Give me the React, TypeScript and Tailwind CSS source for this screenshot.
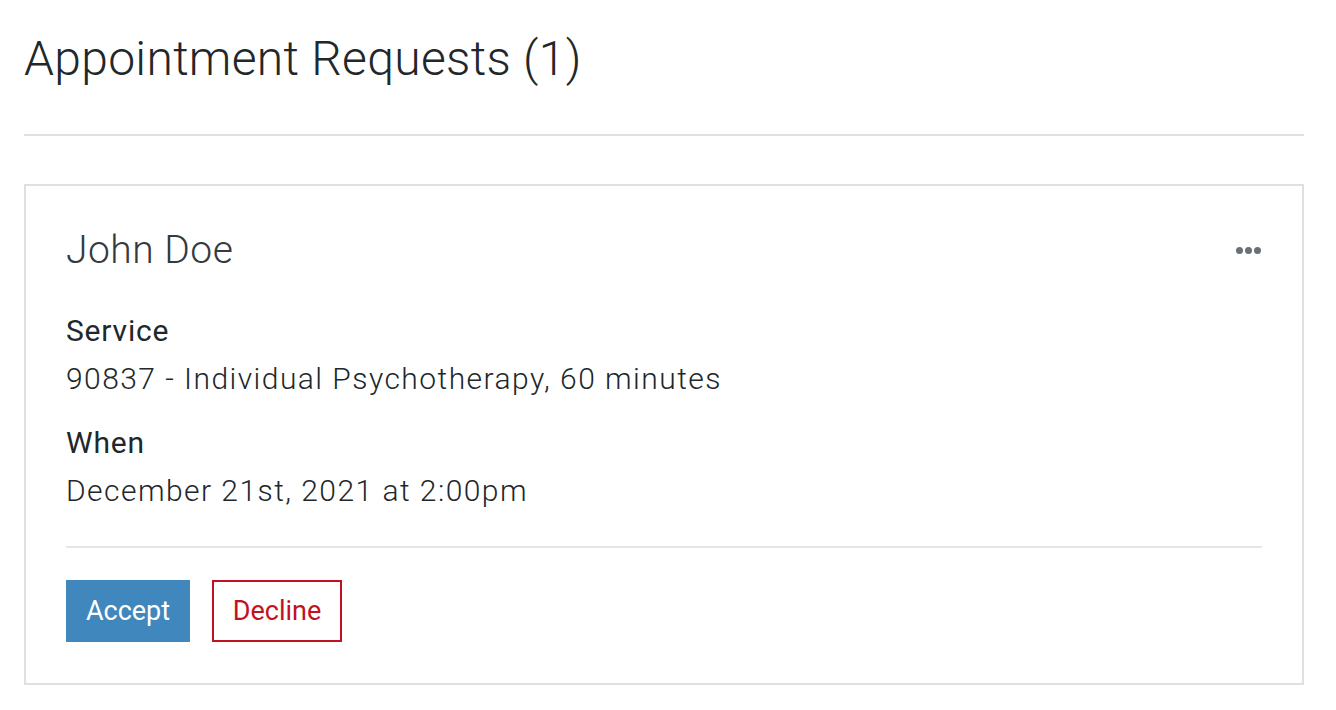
import React from "react";

export default function App() {
  return (
    <div
      className="min-h-[710px] bg-white pl-[24px] pr-[32px] text-[#21272a]"
      style={{ fontFamily: "Roboto, 'Noto Sans', sans-serif" }}
    >
      <h1 className="pt-[34px] text-[48px] leading-[50px] font-light tracking-[0.3px]">
        Appointment Requests (1)
      </h1>
      <div className="mt-[50px] h-[2px] bg-[#e0e0e0]" />
      <div className="mt-[48px] border-2 border-[#e0e0e0] px-[40px] pt-[45px] pb-[41px]">
        <div className="flex items-center justify-between">
          <h2 className="text-[39px] leading-[38px] font-light tracking-[0.5px] text-[#343a3f]">John Doe</h2>
          <button className="flex items-center gap-[2px] mr-[1px]" aria-label="More options">
            <span className="block h-[7px] w-[7px] rounded-full bg-[#697077]" />
            <span className="block h-[7px] w-[7px] rounded-full bg-[#697077]" />
            <span className="block h-[7px] w-[7px] rounded-full bg-[#697077]" />
          </button>
        </div>
        <div className="mt-[38px] text-[30px] leading-[48px]">
          <div className="font-normal tracking-[0.8px]">Service</div>
          <div className="font-light tracking-[1.45px]">90837 - Individual Psychotherapy, 60 minutes</div>
          <div className="mt-[16px] font-normal tracking-[0.8px]">When</div>
          <div className="font-light tracking-[1.45px]">December 21st, 2021 at 2:00pm</div>
        </div>
        <div className="mt-[31px] h-[2px] bg-[#e5e5e5]" />
        <div className="mt-[32px] flex gap-[22px]">
          <button className="h-[62px] w-[124px] bg-[#3f87bd] text-[27px] font-normal text-white">
            Accept
          </button>
          <button className="h-[62px] w-[130px] border-2 border-[#c1121f] text-[27px] font-normal text-[#c1121f]">
            Decline
          </button>
        </div>
      </div>
    </div>
  );
}
